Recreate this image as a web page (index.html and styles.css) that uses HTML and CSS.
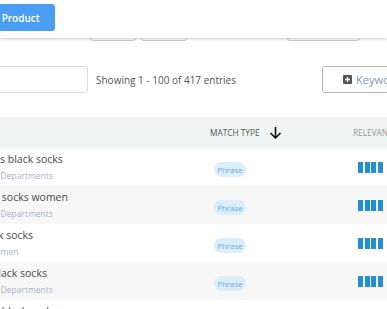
FILE: index.html
```html
<!DOCTYPE html>
<html lang="en">
<head>
    <meta charset="UTF-8">
    <meta name="viewport" content="width=device-width, initial-scale=1.0">
    <title>Keywords</title>
    <link rel="stylesheet" href="styles.css">
</head>
<body>
    <header class="topbar">
        <button class="btn-primary">Add Product</button>
    </header>

    <div class="filters">
        <div class="filter-box"></div>
        <div class="filter-box"></div>
        <div class="filter-box wide"></div>
    </div>

    <div class="toolbar">
        <input class="search" type="text">
        <span class="showing">Showing 1 - 100 of 417 entries</span>
        <button class="btn-outline">
            <span class="plus-icon">
                <svg width="9" height="9" viewBox="0 0 9 9"><rect width="9" height="9" rx="1" fill="#555"/><path d="M4.5 2v5M2 4.5h5" stroke="#fff" stroke-width="1.4"/></svg>
            </span>
            Keywords
        </button>
    </div>

    <div class="table">
        <div class="row head">
            <div class="cell"></div>
            <div class="cell sort">MATCH TYPE
                <svg class="arrow" width="13" height="13" viewBox="0 0 13 13"><path d="M6.5 1v11M1.5 7l5 5 5-5" fill="none" stroke="#111" stroke-width="1.6"/></svg>
            </div>
            <div class="cell muted">RELEVANCE</div>
        </div>
        <div class="row">
            <div class="cell kw"><div class="kw-title">mens black socks</div><div class="kw-sub">in Departments</div></div>
            <div class="cell"><span class="pill">Phrase</span></div>
            <div class="cell"><span class="bars"><i></i><i></i><i></i><i></i></span></div>
        </div>
        <div class="row">
            <div class="cell kw"><div class="kw-title">long socks women</div><div class="kw-sub">in Departments</div></div>
            <div class="cell"><span class="pill">Phrase</span></div>
            <div class="cell"><span class="bars"><i></i><i></i><i></i><i></i></span></div>
        </div>
        <div class="row">
            <div class="cell kw"><div class="kw-title">black socks</div><div class="kw-sub short">in Women</div></div>
            <div class="cell"><span class="pill">Phrase</span></div>
            <div class="cell"><span class="bars"><i></i><i></i><i></i><i></i></span></div>
        </div>
        <div class="row">
            <div class="cell kw"><div class="kw-title">all black socks</div><div class="kw-sub">in Departments</div></div>
            <div class="cell"><span class="pill">Phrase</span></div>
            <div class="cell"><span class="bars"><i></i><i></i><i></i><i></i></span></div>
        </div>
        <div class="row">
            <div class="cell kw"><div class="kw-title">cute black socks</div><div class="kw-sub">in Departments</div></div>
            <div class="cell"><span class="pill">Phrase</span></div>
            <div class="cell"><span class="bars"><i></i><i></i><i></i><i></i></span></div>
        </div>
    </div>
</body>
</html>
```

FILE: styles.css
```css
body {
    margin: 0;
    font-family: "Open Sans", sans-serif;
    color: #4a4a4a;
    background: #fff;
    overflow: hidden;
}
.topbar {
    position: relative;
    z-index: 2;
    height: 38px;
    background: #fff;
    box-shadow: 0 1px 3px rgba(0, 0, 0, 0.22);
    display: flex;
    align-items: flex-start;
}
.btn-primary {
    margin: 4px 0 0 -30px;
    width: 85px;
    height: 27px;
    border: none;
    border-radius: 3px;
    background: #4a9df4;
    color: #fff;
    font-family: inherit;
    font-size: 10px;
    font-weight: 600;
    padding: 0 0 0 10px;
    text-align: left;
}
.filters {
    display: flex;
    gap: 5px;
    margin-top: -22px;
    padding-left: 90px;
    margin-bottom: 25px;
}
.filter-box {
    width: 46px;
    height: 25px;
    border: 1px solid #d0d0d0;
    border-radius: 3px;
    box-sizing: border-box;
}
.filter-box.wide {
    width: 73px;
    margin-left: 95px;
}
.toolbar {
    display: flex;
    align-items: center;
    margin-left: -20px;
    width: 430px;
    height: 27px;
    margin-bottom: 24px;
}
.search {
    width: 108px;
    height: 27px;
    box-sizing: border-box;
    border: 1px solid #dcdcdc;
    border-radius: 3px;
}
.showing {
    margin-left: 8px;
    font-size: 10px;
    color: #555;
}
.btn-outline {
    margin-left: auto;
    width: 88px;
    height: 27px;
    box-sizing: border-box;
    border: 1px solid #b4b4b4;
    border-radius: 3px;
    background: #fff;
    color: #8397b0;
    font-family: inherit;
    font-size: 11px;
    display: flex;
    align-items: center;
    gap: 4px;
    padding: 0 0 0 20px;
}
.plus-icon {
    display: flex;
}
.table {
    margin-left: -25px;
    width: 500px;
}
.row {
    display: grid;
    grid-template-columns: 235px 143px 1fr;
    height: 38px;
    align-items: center;
}
.row:nth-child(odd) {
    background: #f7f7f7;
}
.row.head {
    height: 31px;
    background: #eef5f3;
    font-size: 8.3px;
    color: #555;
}
.cell.sort {
    display: flex;
    align-items: center;
    gap: 9px;
}
.cell.muted {
    color: #999;
}
.cell.kw {
    padding-left: 3px;
    margin-top: -1px;
}
.kw-title {
    font-size: 10.5px;
    line-height: 15px;
    color: #4a4a4a;
}
.kw-sub {
    margin-top: 3px;
    padding-left: 13px;
    font-size: 8.5px;
    line-height: 12px;
    color: #a9b1c8;
}
.kw-sub.short {
    padding-left: 0;
}
.pill {
    display: inline-block;
    margin-left: 4px;
    width: 32px;
    height: 15px;
    line-height: 15px;
    border-radius: 8px;
    background: #dcedfb;
    color: #6aaee0;
    font-size: 8px;
    text-align: center;
}
.bars {
    display: flex;
    gap: 1.5px;
    margin-left: 5px;
}
.bars i {
    width: 5px;
    height: 11px;
    background: #1e8fd8;
}
```
